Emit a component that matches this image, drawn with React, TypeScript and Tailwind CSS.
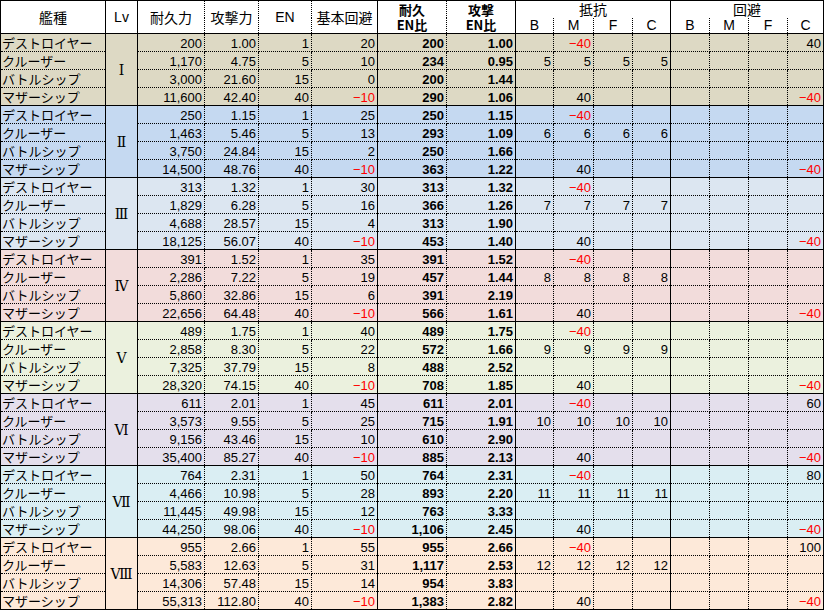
import React from "react";

type Val = number | string;

const names = ["デストロイヤー", "クルーザー", "バトルシップ", "マザーシップ"];

const groups = [
  { lv: "Ⅰ", bg: "bg-[#ddd9c4]", evaC: 40, rows: [["200", "1.00", 1, 20, "200", "1.00"], ["1,170", "4.75", 5, 10, "234", "0.95"], ["3,000", "21.60", 15, 0, "200", "1.44"], ["11,600", "42.40", 40, -10, "290", "1.06"]], res: 5 },
  { lv: "Ⅱ", bg: "bg-[#c5d9f1]", evaC: "", rows: [["250", "1.15", 1, 25, "250", "1.15"], ["1,463", "5.46", 5, 13, "293", "1.09"], ["3,750", "24.84", 15, 2, "250", "1.66"], ["14,500", "48.76", 40, -10, "363", "1.22"]], res: 6 },
  { lv: "Ⅲ", bg: "bg-[#dce6f1]", evaC: "", rows: [["313", "1.32", 1, 30, "313", "1.32"], ["1,829", "6.28", 5, 16, "366", "1.26"], ["4,688", "28.57", 15, 4, "313", "1.90"], ["18,125", "56.07", 40, -10, "453", "1.40"]], res: 7 },
  { lv: "Ⅳ", bg: "bg-[#f2dcdb]", evaC: "", rows: [["391", "1.52", 1, 35, "391", "1.52"], ["2,286", "7.22", 5, 19, "457", "1.44"], ["5,860", "32.86", 15, 6, "391", "2.19"], ["22,656", "64.48", 40, -10, "566", "1.61"]], res: 8 },
  { lv: "Ⅴ", bg: "bg-[#ebf1de]", evaC: "", rows: [["489", "1.75", 1, 40, "489", "1.75"], ["2,858", "8.30", 5, 22, "572", "1.66"], ["7,325", "37.79", 15, 8, "488", "2.52"], ["28,320", "74.15", 40, -10, "708", "1.85"]], res: 9 },
  { lv: "Ⅵ", bg: "bg-[#e4dfec]", evaC: 60, rows: [["611", "2.01", 1, 45, "611", "2.01"], ["3,573", "9.55", 5, 25, "715", "1.91"], ["9,156", "43.46", 15, 10, "610", "2.90"], ["35,400", "85.27", 40, -10, "885", "2.13"]], res: 10 },
  { lv: "Ⅶ", bg: "bg-[#daeef3]", evaC: 80, rows: [["764", "2.31", 1, 50, "764", "2.31"], ["4,466", "10.98", 5, 28, "893", "2.20"], ["11,445", "49.98", 15, 12, "763", "3.33"], ["44,250", "98.06", 40, -10, "1,106", "2.45"]], res: 11 },
  { lv: "Ⅷ", bg: "bg-[#fde9d9]", evaC: 100, rows: [["955", "2.66", 1, 55, "955", "2.66"], ["5,583", "12.63", 5, 31, "1,117", "2.53"], ["14,306", "57.48", 15, 14, "954", "3.83"], ["55,313", "112.80", 40, -10, "1,383", "2.82"]], res: 12 },
];

const widths = [105, 32, 67, 54, 53, 66, 69, 69, 38, 40, 39, 38, 39, 39, 39, 36];

const jp = "font-['Noto_Sans_CJK_JP',sans-serif]";
const num = "font-['Liberation_Sans',sans-serif]";
const base = "border border-dotted border-black p-0 leading-none whitespace-nowrap";

function Num({ v, bold }: { v: Val; bold?: boolean }) {
  if (v === "" || v === undefined) return null;
  if (typeof v === "number" && v < 0) {
    return <span className="text-[#ff0000]">−{Math.abs(v)}</span>;
  }
  return <span className={bold ? "font-bold" : ""}>{v}</span>;
}

export default function App() {
  return (
    <div className="w-[825px] h-[612px] bg-white overflow-hidden">
      <table className="table-fixed border-collapse w-[824px] text-black">
        <colgroup>
          {widths.map((w, i) => (
            <col key={i} style={{ width: w }} />
          ))}
        </colgroup>
        <thead>
          <tr className="h-[17px]">
            <th rowSpan={2} className={`${base} ${jp} text-[14px] font-normal [border-style:solid]`}>艦種</th>
            <th rowSpan={2} className={`${base} ${num} text-[14px] font-normal [border-style:solid]`}>Lv</th>
            <th rowSpan={2} className={`${base} ${jp} text-[14px] font-normal [border-left-style:solid] [border-top-style:solid] [border-bottom-style:solid]`}>耐久力</th>
            <th rowSpan={2} className={`${base} ${jp} text-[14px] font-normal [border-top-style:solid] [border-bottom-style:solid]`}>攻撃力</th>
            <th rowSpan={2} className={`${base} ${num} text-[14px] font-normal [border-top-style:solid] [border-bottom-style:solid]`}>EN</th>
            <th rowSpan={2} className={`${base} ${jp} text-[14px] font-normal [border-top-style:solid] [border-bottom-style:solid]`}>基本回避</th>
            <th rowSpan={2} className={`${base} ${jp} text-[13px] font-bold [border-left-style:solid] [border-top-style:solid] [border-bottom-style:solid]`}>
              <div className="flex flex-col items-center gap-[1px] leading-[14px]">
                <span>耐久</span>
                <span>EN比</span>
              </div>
            </th>
            <th rowSpan={2} className={`${base} ${jp} text-[13px] font-bold [border-top-style:solid] [border-bottom-style:solid]`}>
              <div className="flex flex-col items-center gap-[1px] leading-[14px]">
                <span>攻撃</span>
                <span>EN比</span>
              </div>
            </th>
            <th colSpan={4} className={`${base} ${jp} text-[14px] font-normal [border-left-style:solid] [border-top-style:solid] [border-bottom-style:none]`}>抵抗</th>
            <th colSpan={4} className={`${base} ${jp} text-[14px] font-normal [border-left-style:solid] [border-right-style:solid] [border-top-style:solid] [border-bottom-style:none]`}>回避</th>
          </tr>
          <tr className="h-[16px]">
            {["B", "M", "F", "C", "B", "M", "F", "C"].map((t, i) => (
              <th
                key={i}
                className={`${base} ${num} text-[14px] font-normal [border-top-style:none] [border-bottom-style:solid] ${i === 0 || i === 4 ? "[border-left-style:solid]" : ""} ${i === 7 ? "[border-right-style:solid]" : ""}`}
              >
                {t}
              </th>
            ))}
          </tr>
        </thead>
        <tbody>
          {groups.map((g, gi) =>
            g.rows.map((r, ri) => {
              const top = ri === 0 ? "[border-top-style:solid]" : "";
              const bottom = gi === groups.length - 1 && ri === 3 ? "[border-bottom-style:solid]" : "";
              const res: Val[] =
                ri === 0 ? ["", -40, "", ""] : ri === 1 ? [g.res, g.res, g.res, g.res] : ri === 3 ? ["", 40, "", ""] : ["", "", "", ""];
              const eva: Val[] = ri === 0 ? ["", "", "", g.evaC] : ri === 3 ? ["", "", "", -40] : ["", "", "", ""];
              const cell = `${base} ${num} text-[13px] text-right pr-[2px] pt-[1px] ${top} ${bottom}`;
              return (
                <tr key={`${gi}-${ri}`} className={`h-[18px] ${g.bg}`}>
                  <td className={`${base} ${jp} text-[13px] text-left pl-[1px] [border-left-style:solid] ${top} ${bottom}`}>{names[ri]}</td>
                  {ri === 0 && (
                    <td
                      rowSpan={4}
                      className={`${base} font-['DejaVu_Serif','Noto_Sans_CJK_JP',serif] text-[14px] text-center [border-style:solid]`}
                    >
                      {g.lv}
                    </td>
                  )}
                  <td className={`${cell} [border-left-style:solid]`}><Num v={r[0]} /></td>
                  <td className={cell}><Num v={r[1]} /></td>
                  <td className={cell}><Num v={r[2]} /></td>
                  <td className={cell}><Num v={r[3]} /></td>
                  <td className={`${cell} [border-left-style:solid]`}><Num v={r[4]} bold /></td>
                  <td className={cell}><Num v={r[5]} bold /></td>
                  {res.map((v, i) => (
                    <td key={`r${i}`} className={`${cell} ${i === 0 ? "[border-left-style:solid]" : ""}`}><Num v={v} /></td>
                  ))}
                  {eva.map((v, i) => (
                    <td key={`e${i}`} className={`${cell} ${i === 0 ? "[border-left-style:solid]" : ""} ${i === 3 ? "[border-right-style:solid]" : ""}`}><Num v={v} /></td>
                  ))}
                </tr>
              );
            })
          )}
        </tbody>
      </table>
    </div>
  );
}
